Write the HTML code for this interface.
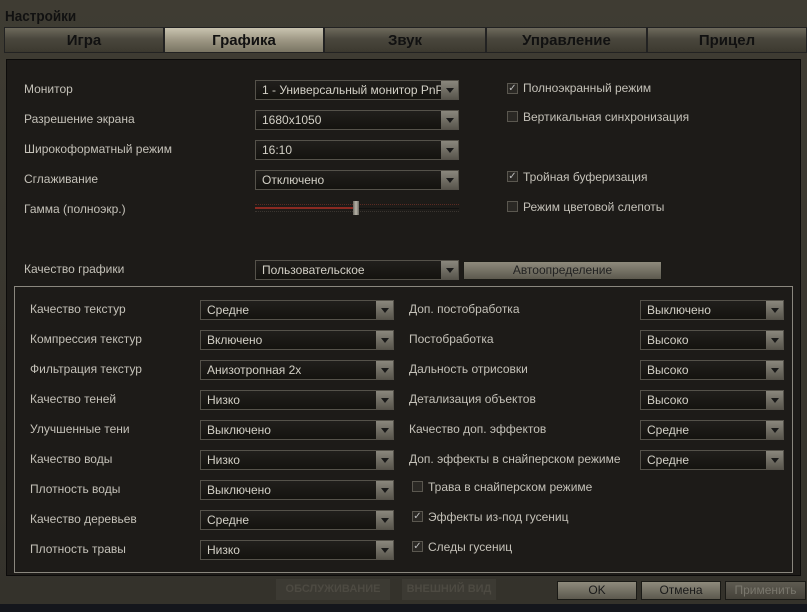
<!DOCTYPE html><html><head><meta charset="utf-8"><style>
*{margin:0;padding:0;box-sizing:border-box}
body{width:807px;height:612px;background:#14161c;position:relative;overflow:hidden;font-family:"Liberation Sans",sans-serif;font-size:12px;color:#c9c6bd}
.win{position:absolute;left:0;top:0;width:807px;height:604px;background:linear-gradient(#3f3c33,#34322b)}
.title{position:absolute;left:5px;top:8px;font-weight:bold;font-size:15px;color:#111;transform:scaleX(.9);transform-origin:left}
.tab{position:absolute;top:27px;height:26px;background:linear-gradient(#6e6a5c,#4a473d 45%,#3c392f);border:1px solid #222;text-align:center;font-weight:bold;font-size:15px;line-height:26px;color:#111}
.tab.a{background:linear-gradient(#c9c4b0,#9d9784 50%,#7a7563)}
.panel{position:absolute;left:6px;top:59px;width:795px;height:517px;background:#1d1b18;border:1px solid #0c0b0a}
.l{position:absolute;font-size:12px;color:#c4c1b8}
.dd{position:absolute;height:20px;background:linear-gradient(#211f1c,#14130f);border:1px solid #55524a;color:#d3d0c6;padding-left:6px;line-height:18px;font-size:12px;white-space:nowrap;overflow:hidden}
.dd::after{content:"";position:absolute;right:0;top:0;width:17px;height:18px;background:linear-gradient(#8a877d,#58554c)}
.dd::before{content:"";position:absolute;right:4px;top:7px;border-left:4.5px solid transparent;border-right:4.5px solid transparent;border-top:5px solid #1a1a1a;z-index:2}
.cb{position:absolute;width:11px;height:11px;border:1px solid #5a574f;background:#2a2824;font-size:10px;line-height:9px;text-align:center;color:#bbb}
.box{position:absolute;left:14px;top:286px;width:779px;height:287px;border:1px solid #8a877e}
.btn{position:absolute;top:581px;height:19px;background:linear-gradient(#8e8a7c,#5c594e);border:1px solid #1a1a16;text-align:center;line-height:17px;color:#1a1a1a;font-size:12px}
</style></head><body>
<div class="win"></div>
<div class="title">Настройки</div>
<div class="tab" style="left:4px;width:160px">Игра</div>
<div class="tab a" style="left:164px;width:160px">Графика</div>
<div class="tab" style="left:324px;width:162px">Звук</div>
<div class="tab" style="left:486px;width:161px">Управление</div>
<div class="tab" style="left:647px;width:160px">Прицел</div>
<div class="panel"></div>

<div class="l" style="left:24px;top:82px">Монитор</div>
<div class="l" style="left:24px;top:112px">Разрешение экрана</div>
<div class="l" style="left:24px;top:142px">Широкоформатный режим</div>
<div class="l" style="left:24px;top:172px">Сглаживание</div>
<div class="l" style="left:24px;top:202px">Гамма (полноэкр.)</div>
<div class="l" style="left:24px;top:262px">Качество графики</div>
<div class="dd" style="left:255px;top:80px;width:204px">1 - Универсальный монитор PnP</div>
<div class="dd" style="left:255px;top:110px;width:204px">1680x1050</div>
<div class="dd" style="left:255px;top:140px;width:204px">16:10</div>
<div class="dd" style="left:255px;top:170px;width:204px">Отключено</div>
<div style="position:absolute;left:255px;top:204px;width:204px;height:8px;border-top:1px dotted #5a2a22;border-bottom:1px dotted #3a3530"></div>
<div style="position:absolute;left:255px;top:207px;width:100px;height:2px;background:#8a2a22"></div>
<div style="position:absolute;left:355px;top:208px;width:104px;height:1px;background:#111"></div>
<div style="position:absolute;left:353px;top:201px;width:6px;height:14px;background:linear-gradient(90deg,#6a675f,#b8b4a8,#6a675f)"></div>
<div class="dd" style="left:255px;top:260px;width:204px">Пользовательское</div>
<div class="btn" style="left:463px;top:261px;width:199px;color:#222">Автоопределение</div>

<div class="cb" style="left:507px;top:83px">✓</div><div class="l" style="left:523px;top:81px">Полноэкранный режим</div>
<div class="cb" style="left:507px;top:111px"></div><div class="l" style="left:523px;top:110px">Вертикальная синхронизация</div>
<div class="cb" style="left:507px;top:171px">✓</div><div class="l" style="left:523px;top:170px">Тройная буферизация</div>
<div class="cb" style="left:507px;top:201px"></div><div class="l" style="left:523px;top:200px">Режим цветовой слепоты</div>

<div class="box"></div>
<div class="l" style="left:30px;top:302px">Качество текстур</div><div class="dd" style="left:200px;top:300px;width:194px">Средне</div>
<div class="l" style="left:30px;top:332px">Компрессия текстур</div><div class="dd" style="left:200px;top:330px;width:194px">Включено</div>
<div class="l" style="left:30px;top:362px">Фильтрация текстур</div><div class="dd" style="left:200px;top:360px;width:194px">Анизотропная 2x</div>
<div class="l" style="left:30px;top:392px">Качество теней</div><div class="dd" style="left:200px;top:390px;width:194px">Низко</div>
<div class="l" style="left:30px;top:422px">Улучшенные тени</div><div class="dd" style="left:200px;top:420px;width:194px">Выключено</div>
<div class="l" style="left:30px;top:452px">Качество воды</div><div class="dd" style="left:200px;top:450px;width:194px">Низко</div>
<div class="l" style="left:30px;top:482px">Плотность воды</div><div class="dd" style="left:200px;top:480px;width:194px">Выключено</div>
<div class="l" style="left:30px;top:512px">Качество деревьев</div><div class="dd" style="left:200px;top:510px;width:194px">Средне</div>
<div class="l" style="left:30px;top:542px">Плотность травы</div><div class="dd" style="left:200px;top:540px;width:194px">Низко</div>

<div class="l" style="left:409px;top:302px">Доп. постобработка</div><div class="dd" style="left:640px;top:300px;width:144px">Выключено</div>
<div class="l" style="left:409px;top:332px">Постобработка</div><div class="dd" style="left:640px;top:330px;width:144px">Высоко</div>
<div class="l" style="left:409px;top:362px">Дальность отрисовки</div><div class="dd" style="left:640px;top:360px;width:144px">Высоко</div>
<div class="l" style="left:409px;top:392px">Детализация объектов</div><div class="dd" style="left:640px;top:390px;width:144px">Высоко</div>
<div class="l" style="left:409px;top:422px">Качество доп. эффектов</div><div class="dd" style="left:640px;top:420px;width:144px">Средне</div>
<div class="l" style="left:409px;top:452px">Доп. эффекты в снайперском режиме</div><div class="dd" style="left:640px;top:450px;width:144px">Средне</div>
<div class="cb" style="left:412px;top:481px"></div><div class="l" style="left:428px;top:480px">Трава в снайперском режиме</div>
<div class="cb" style="left:412px;top:511px">✓</div><div class="l" style="left:428px;top:510px">Эффекты из-под гусениц</div>
<div class="cb" style="left:412px;top:541px">✓</div><div class="l" style="left:428px;top:540px">Следы гусениц</div>

<div style="position:absolute;left:276px;top:579px;width:114px;height:21px;background:#3c3a33;color:#4d4a42;font-weight:bold;font-size:11px;line-height:21px;text-align:center">ОБСЛУЖИВАНИЕ</div>
<div style="position:absolute;left:402px;top:579px;width:94px;height:21px;background:#3c3a33;color:#4d4a42;font-weight:bold;font-size:11px;line-height:21px;text-align:center">ВНЕШНИЙ ВИД</div>
<div class="btn" style="left:557px;width:80px">OK</div>
<div class="btn" style="left:641px;width:80px">Отмена</div>
<div class="btn" style="left:725px;width:81px;background:linear-gradient(#5e5b51,#45423a);color:#7a776d">Применить</div>
</body></html>
